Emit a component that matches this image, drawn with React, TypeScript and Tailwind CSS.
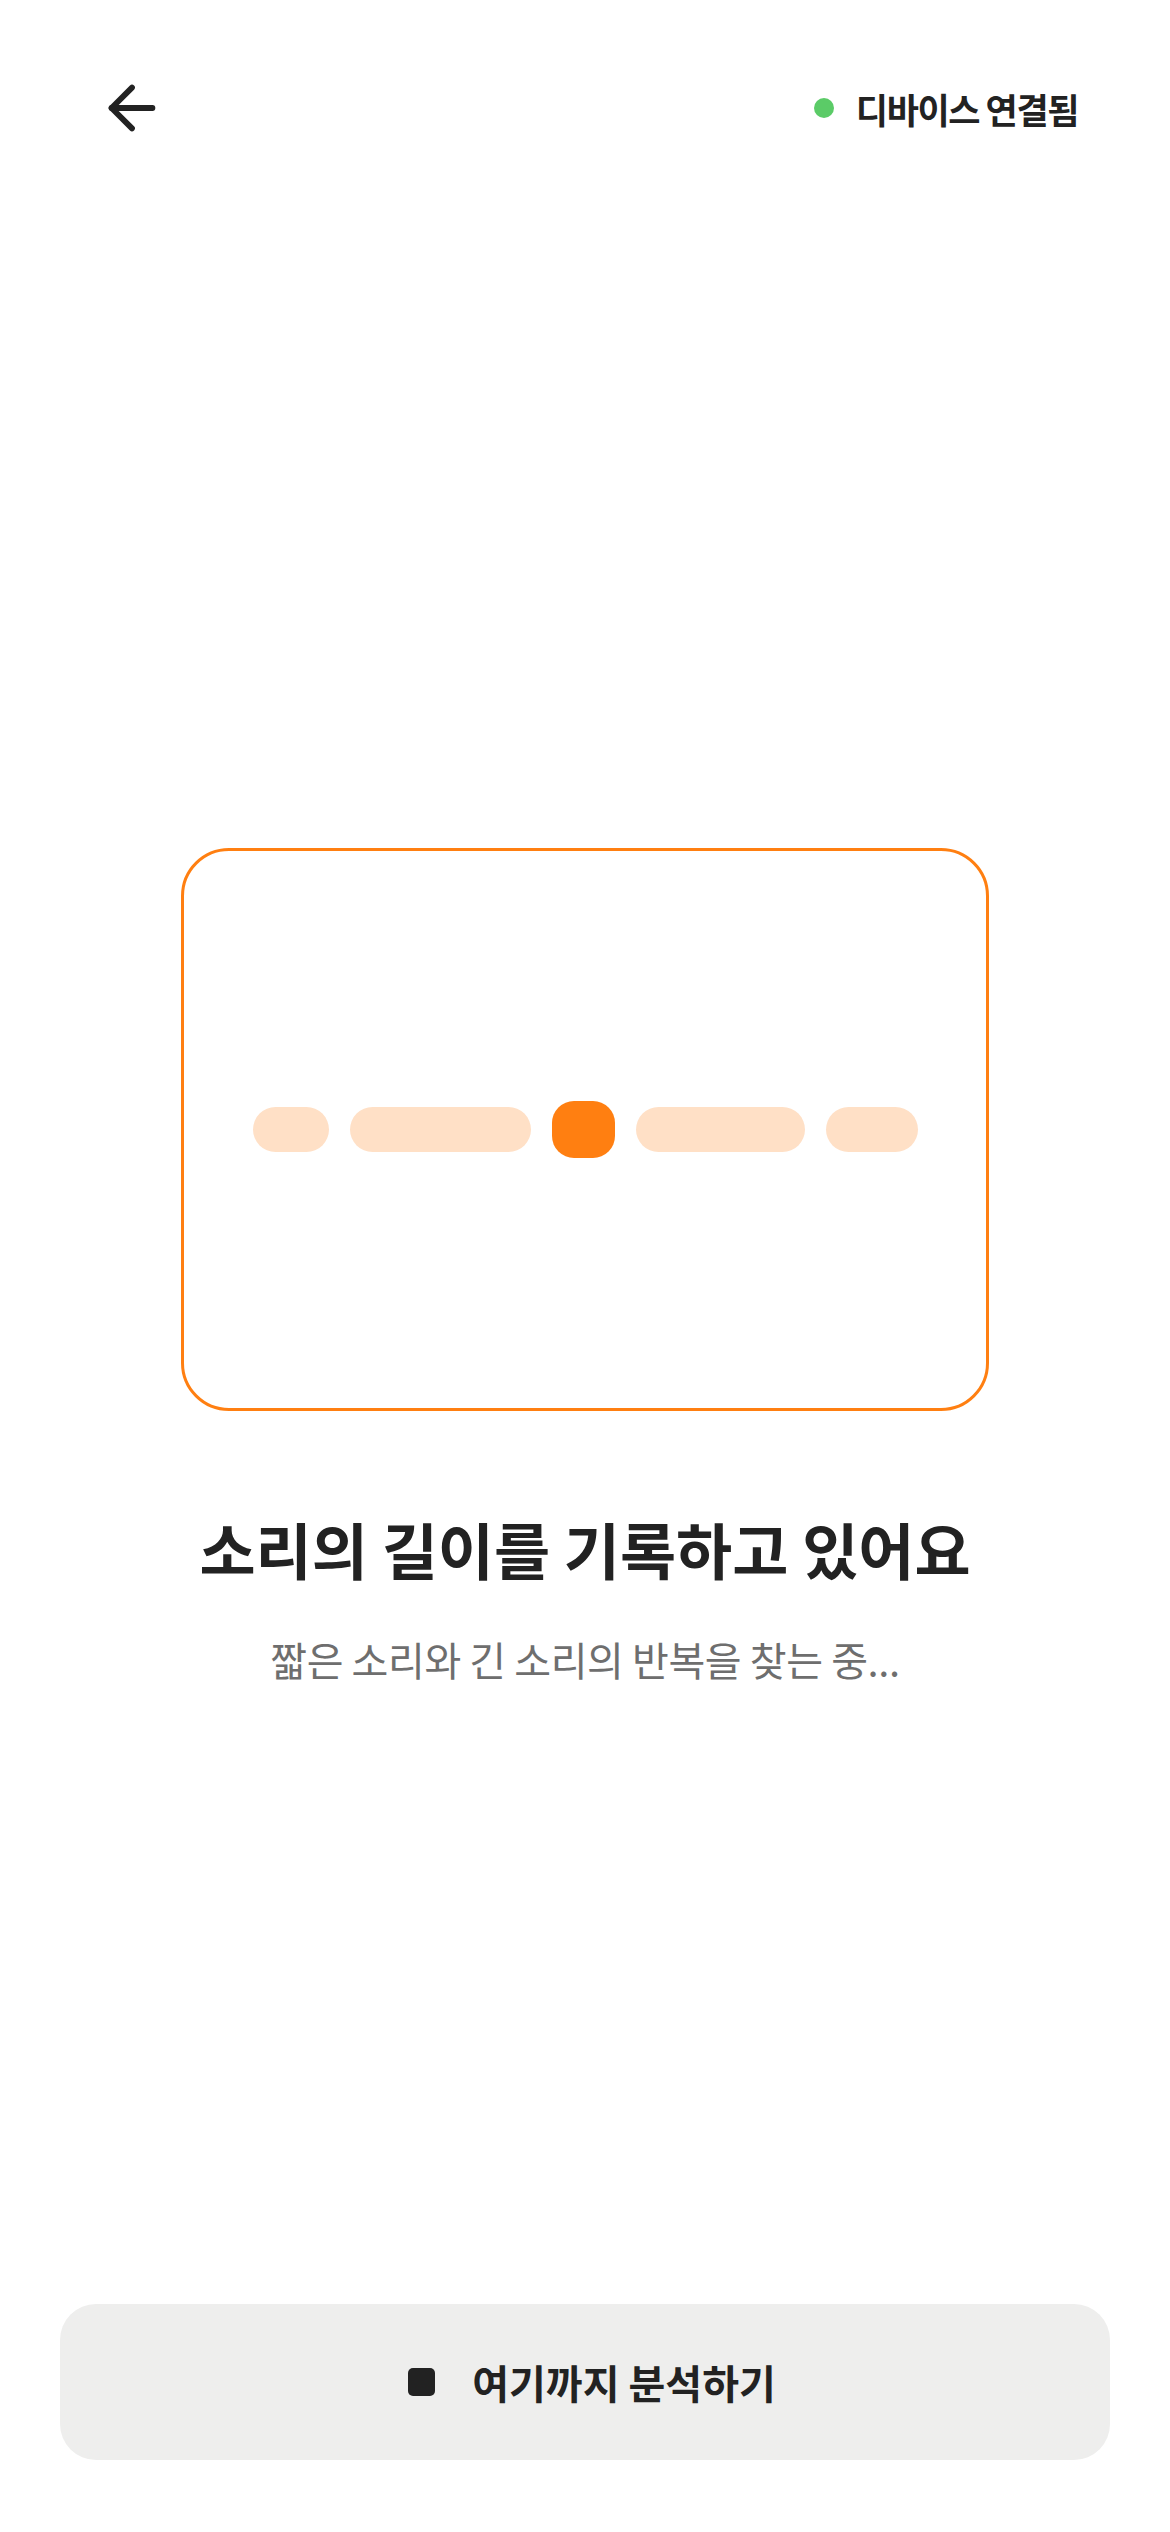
import React from "react";

const bars = [
  { w: "w-[76px]", active: false },
  { w: "w-[181px]", active: false },
  { w: "w-[63px]", active: true },
  { w: "w-[169px]", active: false },
  { w: "w-[92px]", active: false },
];

const App: React.FC = () => {
  return (
    <div
      className="min-h-screen w-full bg-white flex flex-col"
      style={{ fontFamily: '"Noto Sans CJK KR", "Noto Sans", sans-serif' }}
    >
      {/* Header */}
      <div className="flex items-center justify-between pt-[73px] pl-[97px] pr-[92px] h-[143px]">
        <button className="w-[70px] h-[70px] flex items-center justify-center">
          <svg
            width="70"
            height="70"
            viewBox="0 0 24 24"
            fill="none"
            stroke="#222222"
            strokeWidth="2"
            strokeLinecap="round"
            strokeLinejoin="round"
          >
            <path d="m12 19-7-7 7-7" />
            <path d="M19 12H5" />
          </svg>
        </button>
        <div className="flex items-center gap-[22px]">
          <span className="w-[20px] h-[20px] rounded-full bg-[#5bcb67]" />
          <span className="text-[35px] font-bold tracking-[-0.04em] text-[#222222] leading-none">
            디바이스 연결됨
          </span>
        </div>
      </div>

      {/* Card */}
      <div className="mt-[705px] mx-auto w-[808px] h-[563px] rounded-[48px] border-[3px] border-[#ff7f11] flex items-center justify-center">
        <div className="flex items-center gap-[21px]">
          {bars.map((b, i) =>
            b.active ? (
              <div
                key={i}
                className={`${b.w} h-[57px] rounded-[22px] bg-[#ff7f11]`}
              />
            ) : (
              <div
                key={i}
                className={`${b.w} h-[45px] rounded-full bg-[#ffe0c6]`}
              />
            )
          )}
        </div>
      </div>

      {/* Texts */}
      <h1 className="mt-[107px] text-center text-[61px] leading-[61px] font-bold text-[#222222]">
        소리의 길이를 기록하고 있어요
      </h1>
      <p className="mt-[60px] text-center text-[40px] leading-[40px] tracking-[-0.01em] text-[#6e6e6e]">
        짧은 소리와 긴 소리의 반복을 찾는 중...
      </p>

      {/* Bottom button */}
      <div className="mt-auto px-[60px] pb-[72px]">
        <button className="w-full h-[156px] rounded-[36px] bg-[#eeeeed] flex items-center justify-center gap-[37px] pl-[14px]">
          <span className="w-[27px] h-[28px] rounded-[5px] bg-[#222222]" />
          <span className="text-[40px] leading-none font-bold text-[#222222]">
            여기까지 분석하기
          </span>
        </button>
      </div>
    </div>
  );
};

export default App;
